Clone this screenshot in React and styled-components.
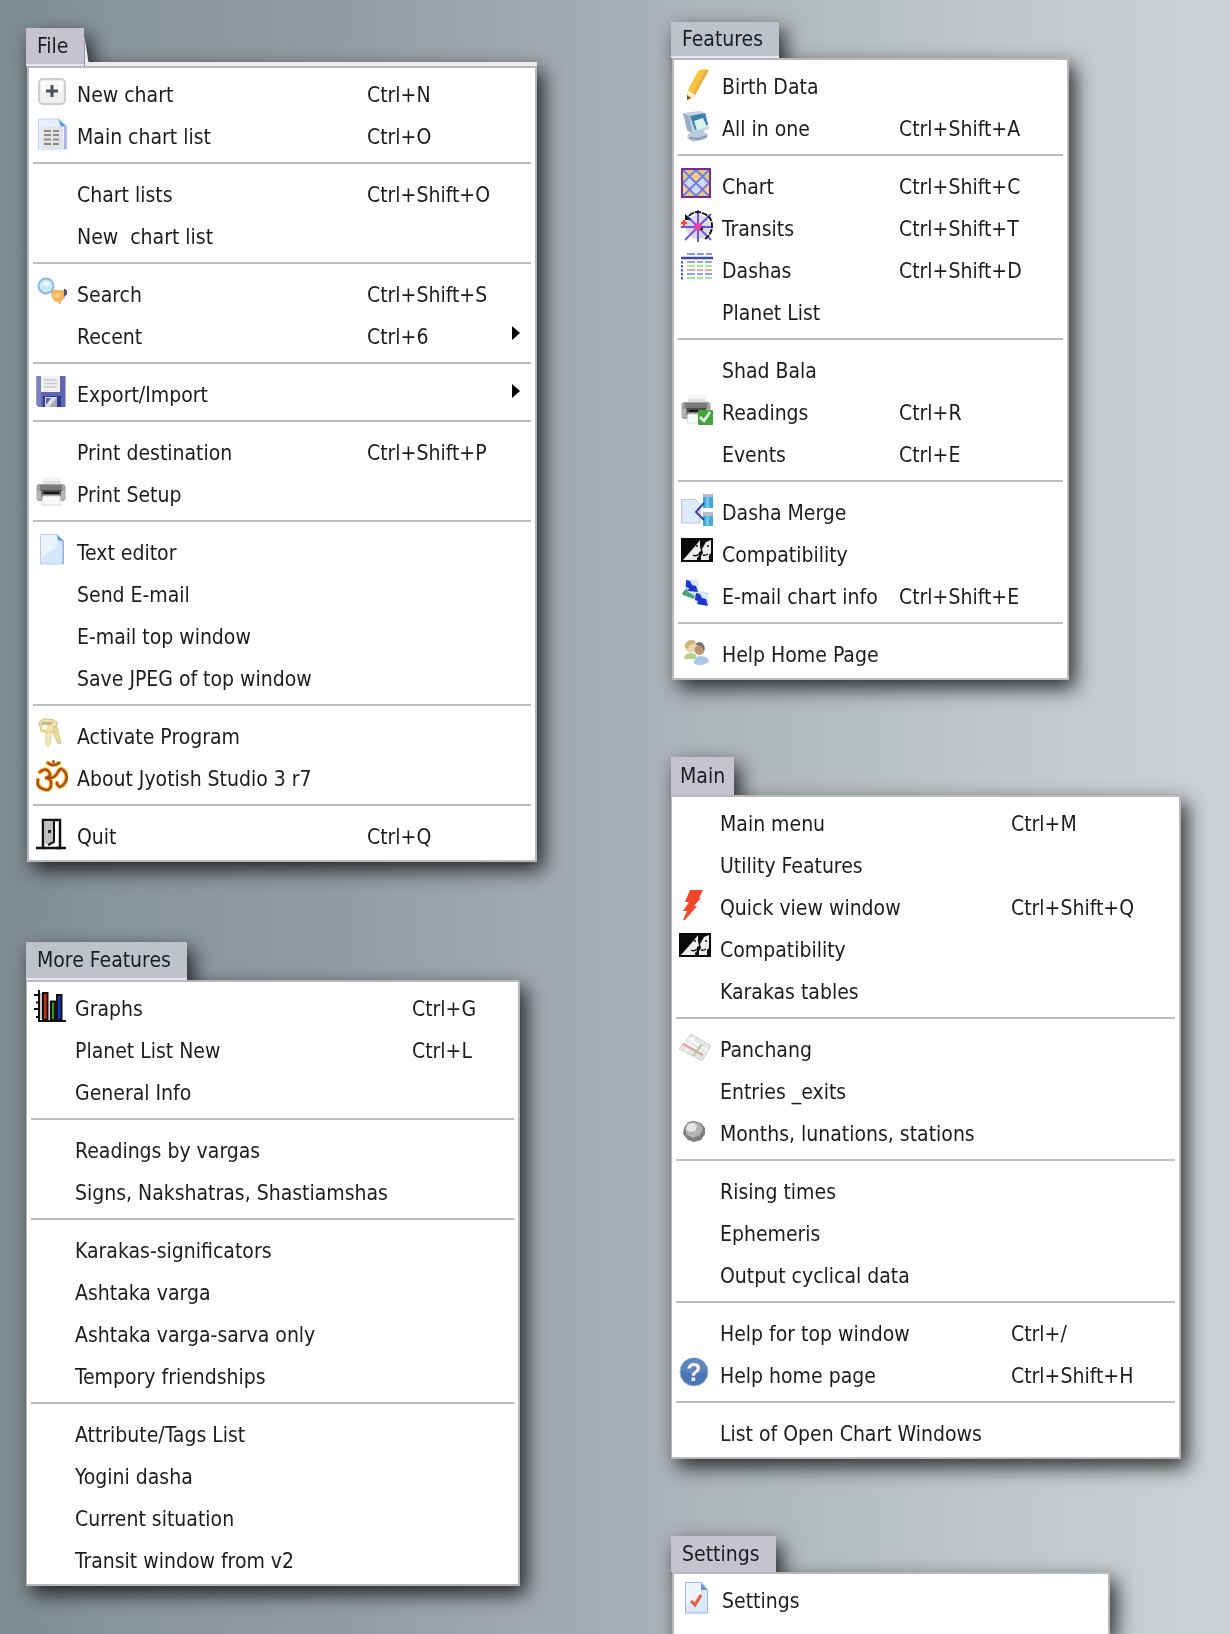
import React from 'react';
import styled, { createGlobalStyle, css } from 'styled-components';

const GlobalStyle = createGlobalStyle`
  *, *::before, *::after { box-sizing: border-box; }
  body {
    margin: 0;
    font-family: "DejaVu Sans Condensed", Tahoma, "DejaVu Sans", sans-serif;
    font-size: 21px;
    line-height: 26px;
    color: #1c1c1c;
  }
`;

const Page = styled.main`
  display: grid;
  grid-template-columns: minmax(0, 645fr) minmax(0, 559fr);
  min-height: 100vh;
  padding-left: 26px;
  background: linear-gradient(
    to right,
    #7e8b90 0%,
    #87949a 9%,
    #929da2 28%,
    #a0a7ae 42%,
    #a7aeb7 51%,
    #adb5b9 56%,
    #b2babd 64%,
    #c0c6c9 80%,
    #ced2d5 100%
  );
`;

const Column = styled.div`
  display: flex;
  flex-direction: column;
  gap: ${(p) => p.$gap}px;
  padding-top: ${(p) => p.$top}px;
`;

const MenuBox = styled.section`
  display: flex;
  flex-direction: column;
  align-items: flex-start;
  width: 100%;
  max-width: ${(p) => p.$width}px;
  filter: drop-shadow(6px 8px 10px rgba(0, 0, 0, 0.78));
  ${(p) => p.$open && css`flex: 1;`}
`;

const TabBar = styled.header`
  display: flex;
  align-items: flex-end;
  width: 100%;
`;

const Tab = styled.button`
  height: ${(p) => (p.$tall ? 38 : 36)}px;
  padding: ${(p) => (p.$wide ? '0 16px 0 11px' : '0 9px')};
  border: 0;
  border-bottom: ${(p) => (p.$lit ? '2px solid #e6e5ee' : '0')};
  background: ${(p) => p.$tone};
  color: inherit;
  font: inherit;
  white-space: nowrap;
`;

const Wedge = styled.span`
  flex: 1;
  height: 30px;
  background: #ececf2;
  clip-path: polygon(0 0, 4px 26px, 100% 26px, 100% 100%, 0 100%);
`;

const Panel = styled.ul`
  align-self: stretch;
  margin: 0 0 0 ${(p) => (p.$framed ? 1 : 0)}px;
  padding: 3px 0 ${(p) => (p.$open ? 0 : 5)}px;
  list-style: none;
  background: #fff;
  border: 2px solid #b9b9bc;
  border-left-width: ${(p) => (p.$framed ? 2 : 1)}px;
  ${(p) => p.$open && css`flex: 1; border-bottom: 0;`}
`;

const Separator = styled.li`
  height: 16px;
  padding: 7px 4px;
  &::before {
    content: '';
    display: block;
    height: 2px;
    background: #bdbdbd;
  }
`;

const Row = styled.button`
  display: grid;
  grid-template-columns: 41px minmax(0, 1fr) ${(p) => p.$keys}px;
  align-items: center;
  width: 100%;
  height: 42px;
  padding: 0 0 0 7px;
  border: 0;
  background: none;
  color: inherit;
  font: inherit;
  text-align: left;
  white-space: pre;
`;

const Slot = styled.span`
  display: block;
  width: 32px;
  height: 32px;
`;

const Label = styled.span`
  padding-top: 6px;
`;

const Keys = styled.span`
  display: flex;
  align-items: center;
  padding: 6px 15px 0 0;
`;

const Arrow = styled.i`
  width: 0;
  height: 0;
  margin: 0 0 8px auto;
  border: 7px solid transparent;
  border-left: 8px solid #000;
  border-right: 0;
`;

const Svg = ({ children }) => (
  <svg width="32" height="32" viewBox="0 0 32 32" aria-hidden="true">
    {children}
  </svg>
);

const PrinterShape = () => (
  <>
    <path d="M7 1h18v9H7z" fill="#f4f4f4" />
    <path d="M7 5h18v4H7z" fill="#e2e2e2" />
    <rect x="0.5" y="8" width="29" height="17" rx="3" fill="#a2a2a2" />
    <rect x="4" y="9" width="22" height="12" fill="#7a7a7a" />
    <rect x="6" y="14" width="19" height="4" fill="#4a4a4a" />
    <rect x="8" y="16" width="15" height="2" fill="#151515" />
    <path d="M1 15h4v8H1zM25 15h4v8h-4z" fill="#b5b5b5" />
    <path d="M7 20h17l1 9H6z" fill="#fafafa" stroke="#dcdcdc" />
  </>
);

const icons = {
  plus: (
    <>
      <rect x="3" y="3" width="26" height="25" rx="4" fill="#f0f0f0" stroke="#cecece" strokeWidth="2" />
      <rect x="5" y="5" width="22" height="11" rx="2" fill="#f9f9f9" />
      <path d="M14.500 9h3v4.500H22v3h-4.500V21h-3v-4.500H10v-3h4.500z" fill="#46515b" />
    </>
  ),
  list: (
    <>
      <path d="M2.500 1h21l7 7v23h-28z" fill="#e6effc" stroke="#c3d3f3" />
      <path d="M28 9h2.500v22H28z" fill="#aab5ea" />
      <path d="M22 1l8.500 7.500H25z" fill="#4d9fec" />
      <rect x="6" y="9" width="21" height="21" fill="#e4e4e4" />
      <path d="M8 13h7M17 13h6M8 17h7M17 17h6M8 21.500h7M17 21.500h6M8 26h7M17 26h6" stroke="#8b8b8b" strokeWidth="2" />
    </>
  ),
  search: (
    <g transform="translate(0 1.500)">
      <circle cx="10" cy="8.500" r="7.500" fill="#c4eafc" stroke="#8bbbe0" strokeWidth="2" />
      <path d="M6 6q4-4 8 0l-3 3z" fill="#fff" opacity=".8" />
      <path d="M15 14l3-2 7 1 4-1 1 2-1 6-5 5-5-1-3-4z" fill="#eeb35b" />
      <path d="M17 16l9-1-4 6-4-1z" fill="#f8c881" />
      <path d="M28 11l3 2v4l-3 2z" fill="#4a5677" />
      <path d="M22 24l3 2-1 1z" fill="#c98b3b" />
    </g>
  ),
  floppy: (
    <>
      <path d="M.5 0h29v31H2.500L.5 29z" fill="#5f67b5" />
      <path d="M.5 0H5v31H2.500L.5 29z" fill="#7b82c4" />
      <path d="M5 0h19v16H5z" fill="#f2f2f2" />
      <path d="M8 4h13M8 7.500h13M8 11h13" stroke="#c8c8c8" strokeWidth="1.500" />
      <path d="M7 20h18v11H7z" fill="#303a92" />
      <path d="M9 21h12v10H9z" fill="#dcdce4" />
      <path d="M10 22h5l-5 7z" fill="#5f67a5" />
      <path d="M21 21l-8 10h8z" fill="#a9acb8" />
    </>
  ),
  printer: <PrinterShape />,
  doc: (
    <>
      <path d="M4.500.5h17l6 6V30h-23z" fill="#d5e7fd" stroke="#bccdf0" />
      <path d="M5 1h16v12L5 25z" fill="#eaf3fe" />
      <path d="M26.500 7h1.500v23h-1.500z" fill="#9fabe2" />
      <path d="M21 1l6.500 6.500L22 6z" fill="#4796dc" />
    </>
  ),
  keys: (
    <>
      <path d="M3 5q1-4 8-4t10 3l-1 8-7 4-8-3z" fill="#efe3aa" stroke="#d2c283" />
      <path d="M5 4h12l-2 3H5z" fill="#c4b993" />
      <circle cx="9" cy="9" r="2.500" fill="#fffbe0" />
      <path d="M10 14h5l-1 12-2 3-2-3z" fill="#f3e9ba" stroke="#dfd29b" />
      <path d="M18 8l3 1 4 16-3 1-5-12z" fill="#eadca0" stroke="#d5c482" />
    </>
  ),
  om: (
    <g fill="none" strokeLinecap="round">
      <g stroke="#f0c23c" strokeWidth="4.500">
        <path d="M4 12q6-5 9 0t-4 6q7 0 6 7t-8 4-5-9" />
        <path d="M14 18q5 0 8-6t7 0-1 12-7-1M12 3q5 4 11 0" />
      </g>
      <g stroke="#b04a1c" strokeWidth="2.400">
        <path d="M4 12q6-5 9 0t-4 6q7 0 6 7t-8 4-5-9" />
        <path d="M14 18q5 0 8-6t7 0-1 12-7-1M12 3q5 4 11 0M17.500 1v1" />
      </g>
    </g>
  ),
  door: (
    <>
      <path d="M7 2h17v28H7z" fill="#fff" stroke="#111" strokeWidth="2.500" />
      <path d="M8 3h10v20l-6 3H8z" fill="#bdbdbd" />
      <path d="M18 3v21l-6 3" fill="none" stroke="#111" strokeWidth="2" />
      <path d="M12 12h3v3h-3z" fill="#222" />
      <path d="M0 30h9M20 30h10" stroke="#111" strokeWidth="2.500" />
    </>
  ),
  graphs: (
    <>
      <path d="M6 3h3v26H6zM15 11h3v18h-3z" fill="#c9c9c9" />
      <path d="M9 3h4.500v27H9z" fill="#c5321e" stroke="#111" strokeWidth="2" />
      <path d="M17 11.500h4V30h-4z" fill="#3f8f25" stroke="#111" strokeWidth="2" />
      <path d="M23 5h4.500v25H23z" fill="#1233c4" stroke="#111" strokeWidth="2" />
      <path d="M5 0v31h27M0 5h5M2 12.500h3M0 19h5M2 27h3" fill="none" stroke="#111" strokeWidth="2" />
    </>
  ),
  pencil: (
    <>
      <path d="M17 3q5-3 11-1L14 27l-6 5-2-3 1-7z" fill="#f6c63c" />
      <path d="M24 2l4 0-14 25-2-2z" fill="#e9b043" />
      <path d="M7 22l7 5-6 4-2-2z" fill="#f8eac6" />
      <path d="M6 27l4 3-4 2z" fill="#8a4e1c" />
    </>
  ),
  monitor: (
    <>
      <path d="M2 3l17-2 6 3 3 15-14 5-7-3z" fill="#c5d3e4" />
      <path d="M2 3l6 3 4 18-6-4z" fill="#98acc5" />
      <path d="M9 6l15-3 3 12-13 5z" fill="#3a82b1" />
      <path d="M13 11l9-3 4 9-10 3z" fill="#dff4f1" />
      <path d="M7 24l14-4 6 5-2 4-13 3-6-4z" fill="#bccadb" />
      <path d="M8 28l10 1 8-3" fill="none" stroke="#8398b2" strokeWidth="2" />
    </>
  ),
  chart: (
    <>
      <rect x="1" y="1" width="28" height="28" fill="#d9cd86" />
      <path d="M15 2l6 6-6 6-6-6zM2 16l7 6-7 7zM28 16v13l-7-7z" fill="#f6cd82" />
      <path d="M9 8l6 7 6-7 7 7-7 7-6 6-6-6-7-7z" fill="#cfdcff" />
      <path d="M2 2l26 26M28 2L2 28M15 2l13 13-13 13L2 15z" fill="none" stroke="#6d78e6" strokeWidth="1.800" />
      <rect x="1" y="1" width="28" height="28" fill="none" stroke="#7c2a8e" strokeWidth="2" />
    </>
  ),
  transits: (
    <>
      <circle cx="17" cy="17" r="12" fill="#ddd9df" />
      <path d="M17 0v32M0 17h31M4 30L30 4M6 6l24 24" stroke="#6f56ef" strokeWidth="2" />
      <path d="M8 6q3-4 9-4 14 2 14 14 0 8-7 13" fill="none" stroke="#151515" strokeWidth="2" strokeDasharray="6 1" />
      <path d="M4 4v6h6z" fill="#111" />
      <path d="M3 10v6M0 13h6" stroke="#f24a3a" strokeWidth="2.500" />
      <circle cx="17" cy="17" r="4" fill="#e443b0" />
      <path d="M18 20l4-4v4z" fill="#333" />
    </>
  ),
  dashas: (
    <g strokeWidth="2" fill="none">
      <path d="M6 2h25" stroke="#8f95f3" strokeDasharray="8 2 7 2" />
      <path d="M0 6h32" stroke="#3c4cab" strokeWidth="2.500" />
      <path d="M1 9v20" stroke="#4f62c4" strokeDasharray="2.500 1.500" />
      <path d="M6 10h25M6 22h25" stroke="#989ff3" strokeDasharray="8 2 6 2" />
      <path d="M6 14h25M6 26h25" stroke="#96f38d" strokeDasharray="8 2 6 2" />
      <path d="M6 18h25" stroke="#f0a19a" strokeDasharray="8 2 6 2" />
    </g>
  ),
  readings: (
    <>
      <PrinterShape />
      <rect x="17" y="16" width="15" height="15" rx="1" fill="#40a53a" />
      <path d="M19 23l4 4 6-9" fill="none" stroke="#eaffea" strokeWidth="2.500" />
    </>
  ),
  merge: (
    <>
      <path d="M.5 5.500H14l5 5V29H.5z" fill="#dcebfd" stroke="#b4c4ea" />
      <path d="M22 0h10v14H22zM22 18h10v14H22z" fill="#41a9dc" />
      <path d="M22 0h10v3H22zM22 18h10v4H22z" fill="#b7bdd1" />
      <path d="M25 3h3v11h-3zM25 22h3v10h-3z" fill="#73c8ec" />
      <path d="M23 9l-8 9 8 8" fill="none" stroke="#3b3f9e" strokeWidth="2" />
    </>
  ),
  faces: (
    <g transform="translate(0 1)">
      <rect x="0" y="1" width="32" height="24" fill="#0a0a0a" />
      <path d="M2 23L16 7l3-4v6l1 5-2 1v4l-2 2v2z" fill="#ededed" />
      <path d="M20 23v-4l2-3-1-4 4-7 5-2v13l-2 2v5z" fill="#ededed" />
      <path d="M15 9h2M26 9h2M12 18q3 2 6-1M22 18q2 1 5-1" fill="none" stroke="#111" strokeWidth="1.500" />
    </g>
  ),
  mailchart: (
    <>
      <path d="M5 1l12 1 1 11 9 1v13l-11-2L3 12z" fill="#dbe6f5" />
      <path d="M1 15l5-5 1 4 7 4-1 3L2 17z" fill="#4aa473" />
      <path d="M5 2l4 1 2 4 4 1 2 6-10-1 1-3-3-1zM15 15l4 1 2 4 4 1 2 7-11-2 1-3-3-1z" fill="#1c35d4" />
    </>
  ),
  people: (
    <g transform="translate(0 3)">
      <path d="M3 20q0-6 7-6t5 6H3z" fill="#b5cf90" />
      <circle cx="9.500" cy="8" r="5.500" fill="#ead6ac" />
      <path d="M4 9q0-8 6-8t4 4q-6-1-7 5z" fill="#cdb57d" />
      <path d="M13 25q0-8 7-8t8 6q-6 5-15 2z" fill="#a9c8e8" />
      <circle cx="18.500" cy="11" r="5" fill="#be946f" />
      <path d="M14 6q3-5 7-2t2 8l-3-5z" fill="#77736c" />
    </g>
  ),
  bolt: <path d="M11 1h13l-4 8h2l-7 8h3L6 31H4l4-9H4l6-9H6z" fill="#f2452a" />,
  panchang: (
    <g transform="translate(0 3)">
      <path d="M12 0l20 12-9 15L0 15z" fill="#e6e6e6" stroke="#cccccc" />
      <path d="M5 7l20 13M9 4l20 13M6 18l9-15M14 22L24 8" stroke="#fafafa" strokeWidth="1.500" />
      <path d="M4 10l20 11" stroke="#e3a3a3" strokeWidth="2" />
      <path d="M14 22l9-12" stroke="#aecb9f" strokeWidth="2" />
    </g>
  ),
  moon: (
    <g transform="translate(0 5)">
      <path d="M9 2l6-1 7 2 4 5v6l-4 6-7 2-6-2-5-6 1-6z" fill="#7e7e7e" />
      <path d="M9 3l6-1 6 2 3 5-3 6-7 3-6-3-2-6z" fill="#b3b3b3" />
      <path d="M9 4l6-1 3 3-2 5-6 1-3-3z" fill="#e6e6e6" />
    </g>
  ),
  help: (
    <>
      <circle cx="15" cy="15" r="14" fill="#4a74b4" stroke="#9db4d6" />
      <path d="M2 14a13 13 0 0 1 26 0q-13 6-26 0z" fill="#5f84bd" />
      <text x="15" y="24" textAnchor="middle" fontSize="25" fontWeight="700" fill="#f2f2f2" fontFamily="Liberation Sans, sans-serif">?</text>
    </>
  ),
  check: (
    <>
      <path d="M4.500.5h16l6 7V31h-22z" fill="#d8e8fd" stroke="#a5b2dc" />
      <path d="M5 1h15v12L5 23z" fill="#eff5fe" />
      <path d="M20 1l6.500 7H20z" fill="#6f98dc" />
      <path d="M10 19l4 4 6-10" fill="none" stroke="#ee5b38" strokeWidth="3" />
    </>
  ),
};

const SEP = null;

const fileMenu = [
  ['New chart', 'Ctrl+N', 'plus'],
  ['Main chart list', 'Ctrl+O', 'list'],
  SEP,
  ['Chart lists', 'Ctrl+Shift+O'],
  ['New  chart list'],
  SEP,
  ['Search', 'Ctrl+Shift+S', 'search'],
  ['Recent', 'Ctrl+6', null, true],
  SEP,
  ['Export/Import', '', 'floppy', true],
  SEP,
  ['Print destination', 'Ctrl+Shift+P'],
  ['Print Setup', '', 'printer'],
  SEP,
  ['Text editor', '', 'doc'],
  ['Send E-mail'],
  ['E-mail top window'],
  ['Save JPEG of top window'],
  SEP,
  ['Activate Program', '', 'keys'],
  ['About Jyotish Studio 3 r7', '', 'om'],
  SEP,
  ['Quit', 'Ctrl+Q', 'door'],
];

const moreMenu = [
  ['Graphs', 'Ctrl+G', 'graphs'],
  ['Planet List New', 'Ctrl+L'],
  ['General Info'],
  SEP,
  ['Readings by vargas'],
  ['Signs, Nakshatras, Shastiamshas'],
  SEP,
  ['Karakas-significators'],
  ['Ashtaka varga'],
  ['Ashtaka varga-sarva only'],
  ['Tempory friendships'],
  SEP,
  ['Attribute/Tags List'],
  ['Yogini dasha'],
  ['Current situation'],
  ['Transit window from v2'],
];

const featuresMenu = [
  ['Birth Data', '', 'pencil'],
  ['All in one', 'Ctrl+Shift+A', 'monitor'],
  SEP,
  ['Chart', 'Ctrl+Shift+C', 'chart'],
  ['Transits', 'Ctrl+Shift+T', 'transits'],
  ['Dashas', 'Ctrl+Shift+D', 'dashas'],
  ['Planet List'],
  SEP,
  ['Shad Bala'],
  ['Readings', 'Ctrl+R', 'readings'],
  ['Events', 'Ctrl+E'],
  SEP,
  ['Dasha Merge', '', 'merge'],
  ['Compatibility', '', 'faces'],
  ['E-mail chart info', 'Ctrl+Shift+E', 'mailchart'],
  SEP,
  ['Help Home Page', '', 'people'],
];

const mainMenu = [
  ['Main menu', 'Ctrl+M'],
  ['Utility Features'],
  ['Quick view window', 'Ctrl+Shift+Q', 'bolt'],
  ['Compatibility', '', 'faces'],
  ['Karakas tables'],
  SEP,
  ['Panchang', '', 'panchang'],
  ['Entries _exits'],
  ['Months, lunations, stations', '', 'moon'],
  SEP,
  ['Rising times'],
  ['Ephemeris'],
  ['Output cyclical data'],
  SEP,
  ['Help for top window', 'Ctrl+/'],
  ['Help home page', 'Ctrl+Shift+H', 'help'],
  SEP,
  ['List of Open Chart Windows'],
];

const settingsMenu = [['Settings', '', 'check']];

function Menu({ title, items, width, keys, tone, tall, framed, lit, wedge, open }) {
  return (
    <MenuBox $width={width} $open={open} aria-label={title}>
      <TabBar>
        <Tab type="button" $tone={tone} $tall={tall} $wide={framed || lit} $lit={lit}>
          {title}
        </Tab>
        {wedge && <Wedge />}
      </TabBar>
      <Panel $framed={framed} $open={open}>
        {items.map((item, i) =>
          item === SEP ? (
            <Separator key={i} role="separator" />
          ) : (
            <li key={i}>
              <Row type="button" $keys={item[1] || item[3] ? keys : 0}>
                <Slot>{item[2] && <Svg>{icons[item[2]]}</Svg>}</Slot>
                <Label>{item[0]}</Label>
                {(item[1] || item[3]) && (
                  <Keys>
                    {item[1]}
                    {item[3] && <Arrow />}
                  </Keys>
                )}
              </Row>
            </li>
          )
        )}
      </Panel>
    </MenuBox>
  );
}

export default function App() {
  return (
    <>
      <GlobalStyle />
      <Page>
        <Column $top={28} $gap={80}>
          <Menu title="File" items={fileMenu} width={511} keys={168} tone="#c6c3d1" tall framed lit wedge />
          <Menu title="More Features" items={moreMenu} width={494} keys={106} tone="#bfc1cb" tall lit />
        </Column>
        <Column $top={22} $gap={77}>
          <Menu title="Features" items={featuresMenu} width={398} keys={168} tone="#bfc1cb" framed lit />
          <Menu title="Main" items={mainMenu} width={510} keys={168} tone="#c6c3d0" tall />
          <Menu title="Settings" items={settingsMenu} width={439} keys={0} tone="#c6c3d0" framed open />
        </Column>
      </Page>
    </>
  );
}
